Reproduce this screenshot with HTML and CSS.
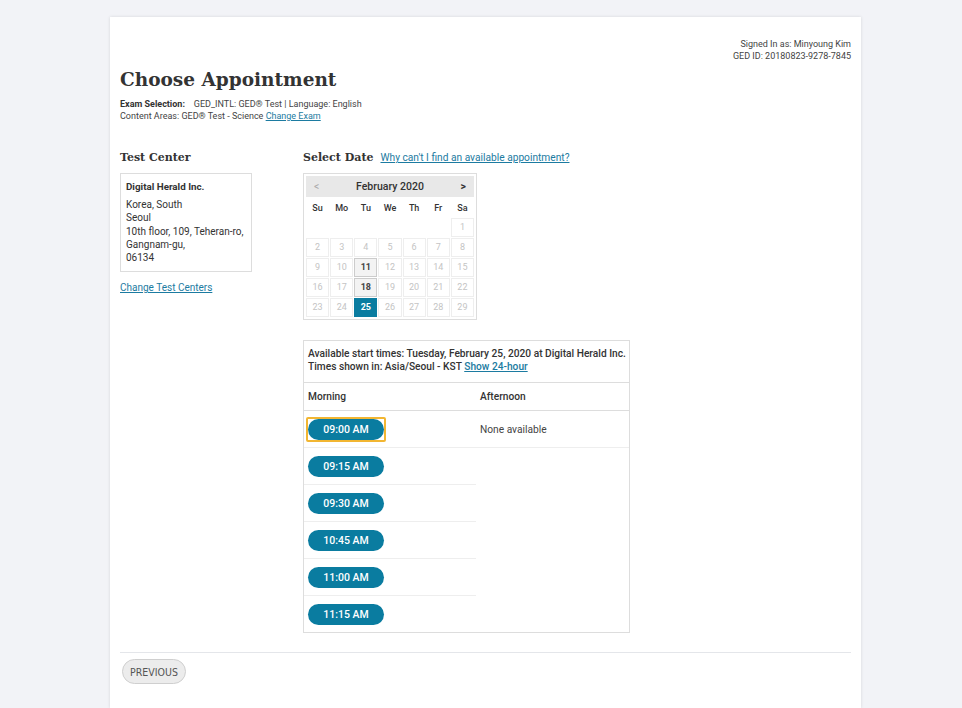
FILE: index.html
```html
<!DOCTYPE html>
<html>
<head>
    <meta charset="utf-8">
    <link rel="stylesheet" href="styles.css">
</head>
<body>
    <div class="card">
        <div class="user-info">
            <div>Signed In as: Minyoung Kim</div>
            <div>GED ID: 20180823-9278-7845</div>
        </div>

        <h1 class="page-title">Choose Appointment</h1>
        <div class="exam-info">
            <div><span class="label">Exam Selection:</span>&nbsp;&nbsp;&nbsp; GED_INTL: GED® Test | Language: English</div>
            <div>Content Areas: GED® Test - Science <a href="#" class="link">Change Exam</a></div>
        </div>

        <div class="main">
            <div class="center-col">
                <h2 class="section-title">Test Center</h2>
                <div class="center-box">
                    <div class="center-name">Digital Herald Inc.</div>
                    <div class="center-address">
                        Korea, South<br>
                        Seoul<br>
                        10th floor, 109, Teheran-ro,<br>
                        Gangnam-gu,<br>
                        06134
                    </div>
                </div>
                <a href="#" class="link change-link">Change Test Centers</a>
            </div>

            <div class="date-col">
                <div class="date-head">
                    <h2 class="section-title">Select Date</h2>
                    <a href="#" class="link">Why can't I find an available appointment?</a>
                </div>

                <div class="calendar">
                    <div class="cal-header">
                        <span class="cal-prev">&lt;</span>
                        <span class="cal-month">February 2020</span>
                        <span class="cal-next">&gt;</span>
                    </div>
                    <div class="cal-grid">
                        <div class="dow">Su</div>
                        <div class="dow">Mo</div>
                        <div class="dow">Tu</div>
                        <div class="dow">We</div>
                        <div class="dow">Th</div>
                        <div class="dow">Fr</div>
                        <div class="dow">Sa</div>

                        <div class="empty"></div>
                        <div class="empty"></div>
                        <div class="empty"></div>
                        <div class="empty"></div>
                        <div class="empty"></div>
                        <div class="empty"></div>
                        <div class="day">1</div>

                        <div class="day">2</div>
                        <div class="day">3</div>
                        <div class="day">4</div>
                        <div class="day">5</div>
                        <div class="day">6</div>
                        <div class="day">7</div>
                        <div class="day">8</div>

                        <div class="day">9</div>
                        <div class="day">10</div>
                        <div class="day open">11</div>
                        <div class="day">12</div>
                        <div class="day">13</div>
                        <div class="day">14</div>
                        <div class="day">15</div>

                        <div class="day">16</div>
                        <div class="day">17</div>
                        <div class="day open">18</div>
                        <div class="day">19</div>
                        <div class="day">20</div>
                        <div class="day">21</div>
                        <div class="day">22</div>

                        <div class="day">23</div>
                        <div class="day">24</div>
                        <div class="day selected">25</div>
                        <div class="day">26</div>
                        <div class="day">27</div>
                        <div class="day">28</div>
                        <div class="day">29</div>
                    </div>
                </div>

                <div class="times">
                    <div class="times-head">
                        <div>Available start times: Tuesday, February 25, 2020 at Digital Herald Inc.</div>
                        <div>Times shown in: Asia/Seoul - KST <a href="#" class="link">Show 24-hour</a></div>
                    </div>
                    <div class="times-cols">
                        <div class="col-title">Morning</div>
                        <div class="col-title">Afternoon</div>
                    </div>
                    <div class="times-cols">
                        <div class="slot-list">
                            <div class="slot"><span class="focus-ring"><button class="time-btn">09:00 AM</button></span></div>
                            <div class="slot"><button class="time-btn">09:15 AM</button></div>
                            <div class="slot"><button class="time-btn">09:30 AM</button></div>
                            <div class="slot"><button class="time-btn">10:45 AM</button></div>
                            <div class="slot"><button class="time-btn">11:00 AM</button></div>
                            <div class="slot"><button class="time-btn">11:15 AM</button></div>
                        </div>
                        <div class="slot-list">
                            <div class="slot none">None available</div>
                        </div>
                    </div>
                </div>
            </div>
        </div>

        <div class="footer">
            <button class="prev-btn">PREVIOUS</button>
        </div>
    </div>
</body>
</html>
```

FILE: styles.css
```css
body {
    margin: 0;
    background: #f2f3f7;
    font-family: Roboto, 'Liberation Sans', sans-serif;
    color: #333;
}

.card {
    width: 751px;
    margin: 17px 0 0 110px;
    padding: 21px 10px 24px;
    box-sizing: border-box;
    background: #fff;
    box-shadow: 0 0 3px rgba(0, 0, 0, 0.12);
}

.user-info {
    text-align: right;
    font-size: 9px;
    line-height: 12px;
    color: #444;
}

.page-title {
    margin: 4px 0 0;
    font-family: 'DejaVu Serif', 'Liberation Serif', serif;
    font-size: 18.5px;
    line-height: 28px;
    font-weight: bold;
    color: #333;
}

.exam-info {
    margin-top: 4px;
    font-size: 9px;
    line-height: 12px;
    color: #444;
}

.exam-info .label {
    font-weight: bold;
    color: #333;
}

.link {
    color: #1c7ba1;
    text-decoration: underline;
}

.main {
    display: flex;
    margin-top: 28px;
}

.center-col {
    width: 183px;
}

.section-title {
    margin: 0;
    font-family: 'DejaVu Serif', 'Liberation Serif', serif;
    font-size: 11px;
    line-height: 16px;
    font-weight: bold;
    color: #333;
}

.center-box {
    width: 132px;
    height: 99px;
    margin-top: 7px;
    padding: 6px 4px 6px 5px;
    box-sizing: border-box;
    border: 1px solid #ddd;
}

.center-name {
    font-size: 9.8px;
    font-weight: bold;
    line-height: 14px;
}

.center-address {
    margin-top: 4px;
    font-size: 10px;
    line-height: 13.3px;
    white-space: nowrap;
}

.change-link {
    display: block;
    margin-top: 10px;
    font-size: 10px;
}

.date-head {
    display: flex;
    align-items: baseline;
    gap: 7px;
    font-size: 10.2px;
}

.calendar {
    width: 174px;
    margin-top: 7px;
    padding: 2px;
    box-sizing: border-box;
    border: 1px solid #ddd;
}

.cal-header {
    display: flex;
    align-items: center;
    justify-content: space-between;
    height: 21px;
    padding: 0 8px;
    background: #e8e8e8;
    font-size: 10.5px;
}

.cal-prev {
    color: #aaa;
}

.cal-month {
    font-weight: 500;
    color: #333;
}

.cal-next {
    color: #333;
    font-weight: bold;
}

.cal-grid {
    display: grid;
    grid-template-columns: repeat(7, 1fr);
    grid-auto-rows: 19px;
    gap: 1px;
    margin-top: 1px;
    font-size: 9px;
    text-align: center;
}

.dow {
    line-height: 21px;
    font-weight: 500;
    color: #333;
}

.dow:nth-child(-n+7) {
    margin-bottom: 1px;
}

.day {
    line-height: 17px;
    border: 1px solid #eee;
    color: #c4c4c4;
}

.day.open {
    background: #f3f3f3;
    border-color: #ccc;
    color: #444;
    font-weight: bold;
}

.day.selected {
    background: #0a7ca0;
    border-color: #0a7ca0;
    color: #fff;
    font-weight: bold;
}

.times {
    width: 327px;
    margin-top: 20px;
    border: 1px solid #ddd;
    box-sizing: border-box;
    font-size: 10.2px;
}

.times-head {
    padding: 6px 4px 9px;
    line-height: 13px;
    font-weight: 500;
    white-space: nowrap;
    border-bottom: 1px solid #ddd;
}

.times-cols {
    display: grid;
    grid-template-columns: 172px 1fr;
}

.col-title {
    padding: 0 4px;
    line-height: 27px;
    font-weight: 500;
    border-bottom: 1px solid #ddd;
}

.slot {
    display: flex;
    align-items: center;
    height: 36px;
    padding: 0 4px;
    border-bottom: 1px solid #eee;
}

.slot-list .slot:last-child {
    border-bottom: none;
}

.slot-list:last-child .slot {
    border-bottom: 1px solid #eee;
    color: #444;
}

.time-btn {
    width: 76px;
    height: 21px;
    border: none;
    border-radius: 11px;
    background: #0a7ca0;
    color: #fff;
    font-family: Roboto, 'Liberation Sans', sans-serif;
    font-size: 10.5px;
    font-weight: 500;
}

.focus-ring {
    display: inline-flex;
    margin-left: -2px;
    border: 2px solid #f2b632;
    border-radius: 2px;
}

.footer {
    margin-top: 19px;
    padding-top: 6px;
    border-top: 1px solid #e4e6ea;
}

.prev-btn {
    margin-left: 2px;
    width: 64px;
    height: 25px;
    border: 1px solid #cfcfcf;
    border-radius: 13px;
    background: #ececec;
    color: #555;
    font-family: 'Liberation Sans Narrow', 'DejaVu Sans Condensed', sans-serif;
    font-size: 10.5px;
}
```
